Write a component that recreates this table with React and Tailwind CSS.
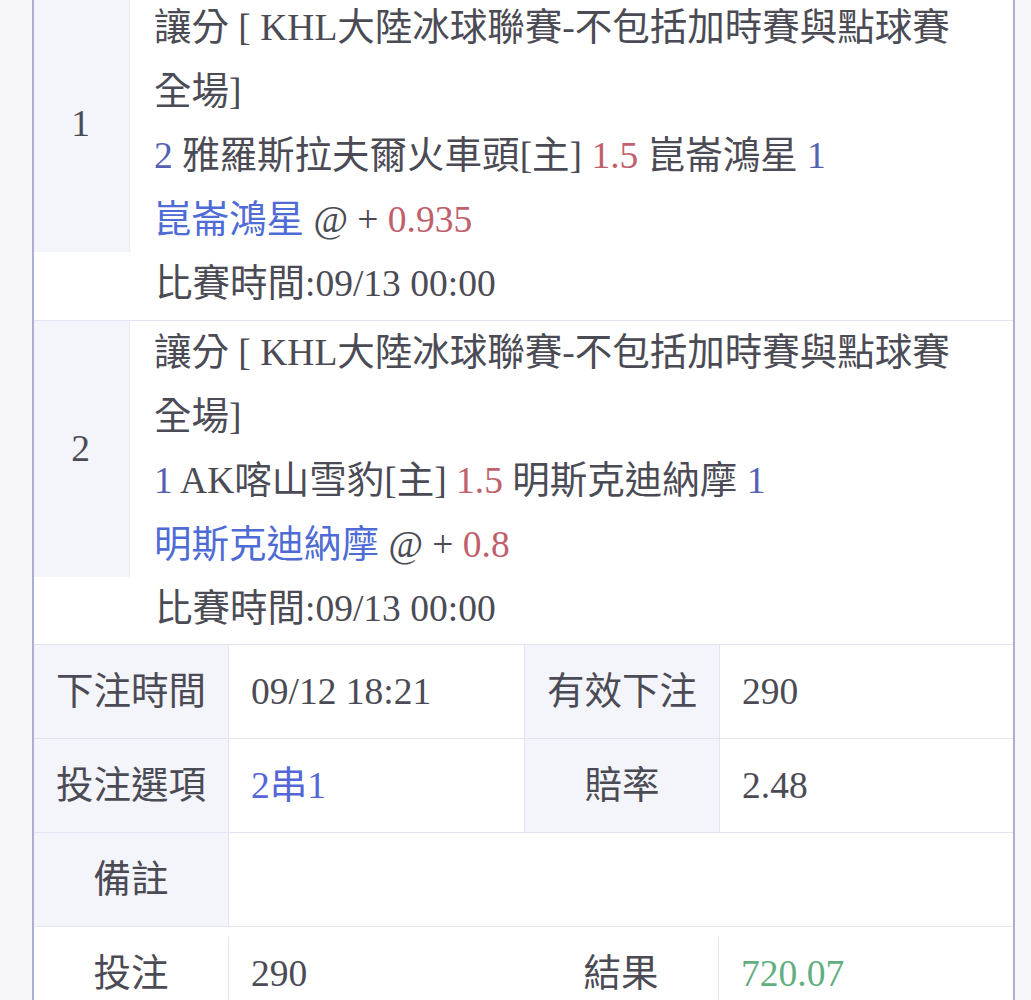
import React from "react";

const matches = [
  {
    no: 1,
    league: "讓分 [ KHL大陸冰球聯賽-不包括加時賽與點球賽 全場]",
    homeScore: "2",
    home: "雅羅斯拉夫爾火車頭",
    line: "1.5",
    away: "崑崙鴻星",
    awayScore: "1",
    pick: "崑崙鴻星",
    odds: "0.935",
    time: "09/13 00:00",
  },
  {
    no: 2,
    league: "讓分 [ KHL大陸冰球聯賽-不包括加時賽與點球賽 全場]",
    homeScore: "1",
    home: "AK喀山雪豹",
    line: "1.5",
    away: "明斯克迪納摩",
    awayScore: "1",
    pick: "明斯克迪納摩",
    odds: "0.8",
    time: "09/13 00:00",
  },
];

const MatchRow = ({ m, first }) => (
  <div
    className={`border-b border-[#e3e4f1] ${
      first ? "-mt-[4px] pb-[4px]" : "pb-[3px]"
    }`}
  >
    <div className="flex">
      {/* number cell */}
      <div className="w-[96px] shrink-0 bg-[#f4f5fa] border-r border-[#e8e9f3] flex items-center justify-center pr-[2px]">
        {m.no}
      </div>
      {/* bet content */}
      <div className="flex-1 pl-[24px] pr-[34px]">
        <div>{m.league}</div>
        <div>
          <span className="text-[#5560b3]">{m.homeScore}</span> {m.home}[主]{" "}
          <span className="text-[#c0606c]">{m.line}</span> {m.away}{" "}
          <span className="text-[#5560b3]">{m.awayScore}</span>
        </div>
        <div>
          <span className="text-[#4f6bd6]">{m.pick}</span> @ +{" "}
          <span className="text-[#c0606c]">{m.odds}</span>
        </div>
      </div>
    </div>
    <div className="pl-[121px]">比賽時間:{m.time}</div>
  </div>
);

const Label = ({ children, white }) => (
  <div
    className={`w-[194px] shrink-0 flex items-center justify-center ${
      white ? "bg-white" : "bg-[#f4f5fa]"
    }`}
  >
    {children}
  </div>
);

const Value = ({ children, className = "" }) => (
  <div
    className={`flex items-center pl-[22px] border-l border-[#e3e4f1] ${className}`}
  >
    {children}
  </div>
);

export default function App() {
  return (
    <div
      className="min-h-screen bg-[#f7f7f9] text-[#4b4b55] text-[37.5px] leading-[64px] overflow-hidden"
      style={{
        fontFamily: '"Liberation Serif", "Noto Sans CJK TC", serif',
      }}
    >
      <div className="ml-[32px] w-[983px] min-h-[1010px] border-x-2 border-[#abaed3] bg-white">
        {matches.map((m, i) => (
          <MatchRow key={m.no} m={m} first={i === 0} />
        ))}

        {/* summary table */}
        <div className="flex h-[94px] border-b border-[#e3e4f1]">
          <Label>下注時間</Label>
          <Value className="w-[296px]">09/12 18:21</Value>
          <div className="flex border-l border-[#e3e4f1]">
            <Label>有效下注</Label>
          </div>
          <Value className="flex-1">290</Value>
        </div>
        <div className="flex h-[94px] border-b border-[#e3e4f1]">
          <Label>投注選項</Label>
          <Value className="w-[296px] text-[#5566d6]">2串1</Value>
          <div className="flex border-l border-[#e3e4f1]">
            <Label>賠率</Label>
          </div>
          <Value className="flex-1">2.48</Value>
        </div>
        <div className="flex h-[94px] border-b border-[#e3e4f1]">
          <Label>備註</Label>
          <Value className="flex-1" />
        </div>
        <div className="flex h-[94px]">
          <Label white>投注</Label>
          <Value className="w-[296px] mt-[10px] pb-[10px]">290</Value>
          <div className="flex mt-[10px] pb-[10px]">
            <Label white>結果</Label>
          </div>
          <Value className="flex-1 mt-[10px] pb-[10px] text-[#62ae80]">
            720.07
          </Value>
        </div>
      </div>
    </div>
  );
}
